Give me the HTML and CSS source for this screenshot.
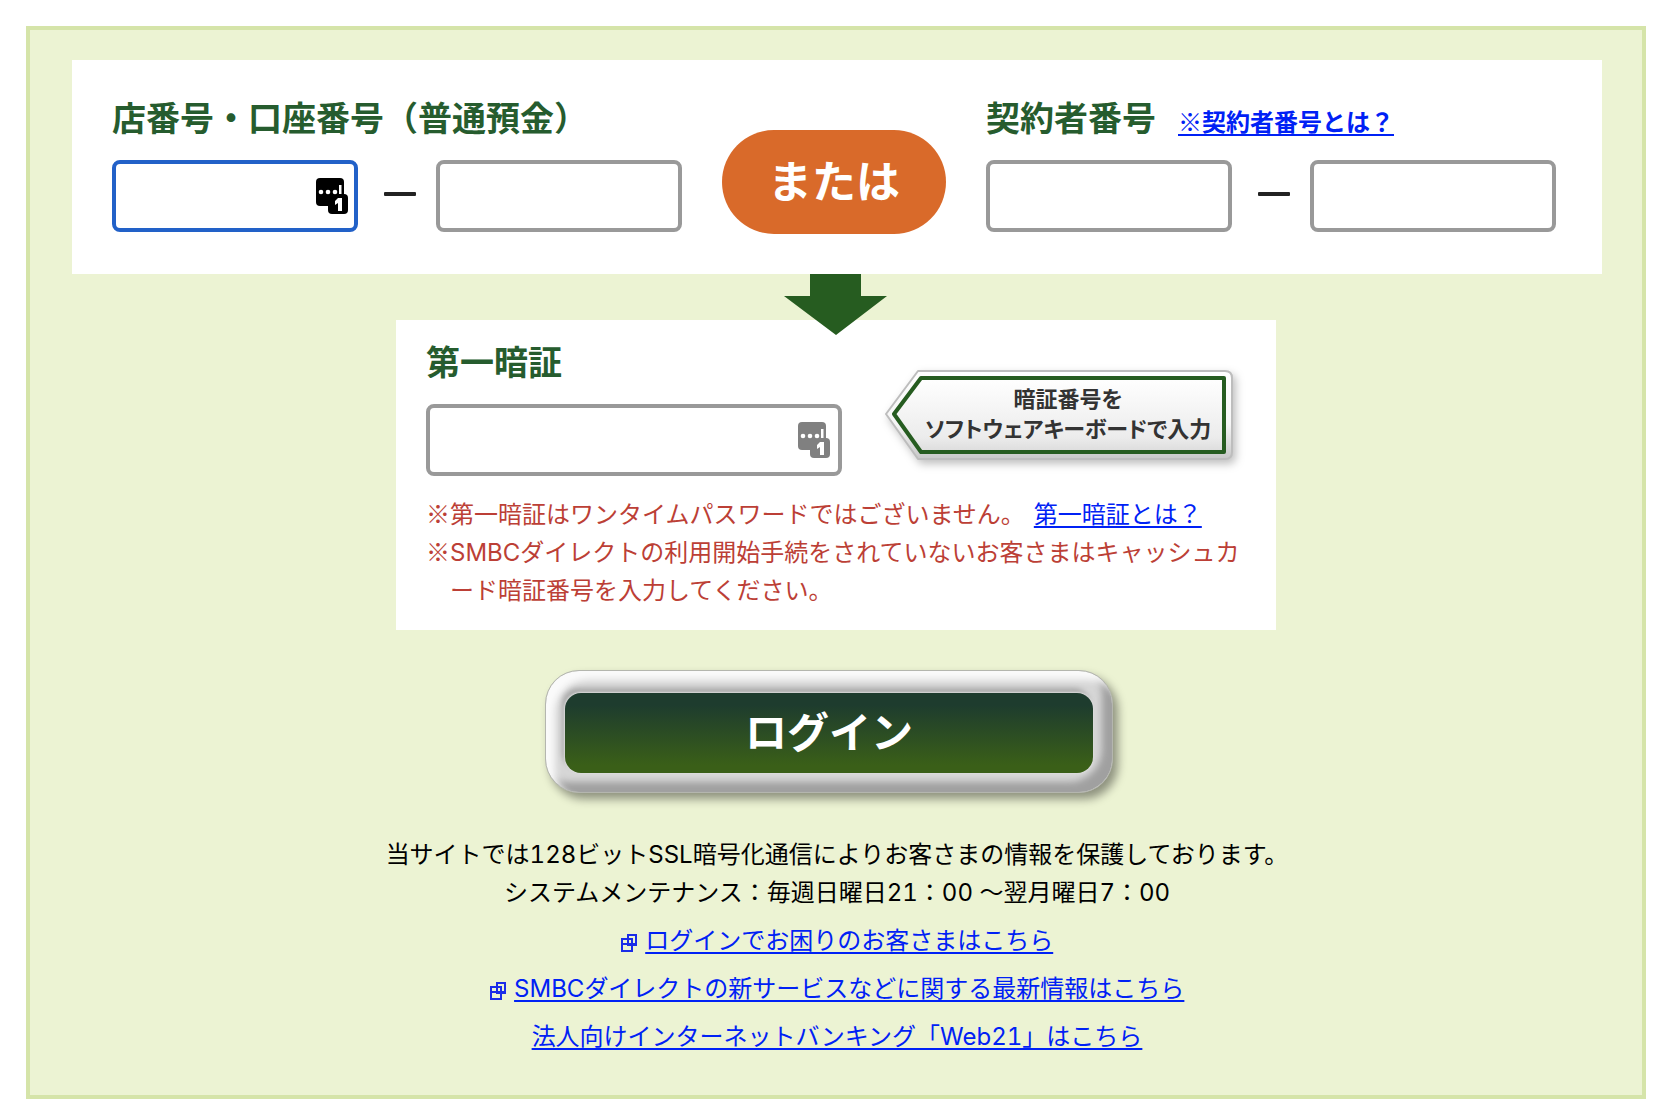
FILE: index.html
```html
<!DOCTYPE html>
<html lang="ja">
<head>
    <meta charset="UTF-8">
    <meta name="viewport" content="width=device-width, initial-scale=1.0">
    <title>ログイン</title>
    <link rel="stylesheet" href="styles.css">
</head>
<body>

<form class="login" id="login-form">
    <div class="account-box">
        <div class="account-group">
            <div class="label-row">
                <label class="label" for="branch-no">店番号・口座番号（普通預金）</label>
            </div>
            <div class="field-row">
                <div class="field">
                    <input class="input focused" type="text" id="branch-no" maxlength="3">
                    <svg class="key-icon" width="32" height="36" viewBox="0 0 32 36">
                        <rect width="28" height="28" rx="4"/>
                        <rect x="12" y="16" width="20" height="20" rx="4"/>
                        <g fill="#fff">
                            <circle cx="5" cy="14" r="2.3"/>
                            <circle cx="12" cy="14" r="2.3"/>
                            <circle cx="19" cy="14" r="2.3"/>
                            <rect x="23" y="7" width="2.5" height="9"/>
                            <path d="M22 20h4v13h-4v-8l-3 2v-4z"/>
                        </g>
                    </svg>
                </div>
                <span class="dash"></span>
                <input class="input" type="text" id="account-no" aria-label="口座番号" maxlength="7">
            </div>
        </div>
        <div class="or">または</div>
        <div class="account-group">
            <div class="label-row">
                <label class="label" for="contract-no1">契約者番号</label>
                <a class="help-link" href="#">※契約者番号とは？</a>
            </div>
            <div class="field-row">
                <input class="input" type="text" id="contract-no1" maxlength="5">
                <span class="dash"></span>
                <input class="input" type="text" id="contract-no2" aria-label="契約者番号" maxlength="5">
            </div>
        </div>
        <svg class="arrow" width="104" height="62" viewBox="0 0 104 62">
            <path d="M26 0h51v22h26L52 61 0 22h26z" fill="#265c20"/>
        </svg>
    </div>

    <div class="pass-box">
        <div class="pass-row">
            <div class="pass-group">
                <label class="label" for="password">第一暗証</label>
                <div class="field">
                    <input class="input wide" type="password" id="password">
                    <svg class="key-icon gray" width="32" height="36" viewBox="0 0 32 36">
                        <rect width="28" height="28" rx="4"/>
                        <rect x="12" y="16" width="20" height="20" rx="4"/>
                        <g fill="#fff">
                            <circle cx="5" cy="14" r="2.3"/>
                            <circle cx="12" cy="14" r="2.3"/>
                            <circle cx="19" cy="14" r="2.3"/>
                            <rect x="23" y="7" width="2.5" height="9"/>
                            <path d="M22 20h4v13h-4v-8l-3 2v-4z"/>
                        </g>
                    </svg>
                </div>
            </div>
            <button type="button" class="keyboard-btn" id="keyboard-btn">
                <svg class="keyboard-bg" width="348" height="90" viewBox="0 0 348 90">
                    <defs>
                        <linearGradient id="plate" x1="0" y1="0" x2="0" y2="1">
                            <stop offset="0" stop-color="#fff"/>
                            <stop offset="0.6" stop-color="#f6f6f6"/>
                            <stop offset="1" stop-color="#c8c8c8"/>
                        </linearGradient>
                        <linearGradient id="face" x1="0" y1="0" x2="0" y2="1">
                            <stop offset="0" stop-color="#fff"/>
                            <stop offset="0.8" stop-color="#ececec"/>
                            <stop offset="1" stop-color="#dcdcdc"/>
                        </linearGradient>
                    </defs>
                    <path d="M33 1h307q7 0 7 7v74q0 7-7 7H33L1 44z" fill="url(#plate)" stroke="#bdbdbd" stroke-width="2" stroke-linejoin="round"/>
                    <path d="M36 8h303v74H36L9 44z" fill="url(#face)" stroke="#265c20" stroke-width="4" stroke-linejoin="round"/>
                </svg>
                <span class="keyboard-text">暗証番号を<br>ソフトウェアキーボードで入力</span>
            </button>
        </div>
        <p class="note"><span class="mark">※</span>第一暗証はワンタイムパスワードではございません。<a class="note-link" href="#">第一暗証とは？</a></p>
        <p class="note"><span class="mark">※</span>SMBCダイレクトの利用開始手続をされていないお客さまはキャッシュカ<wbr>ード暗証番号を入力してください。</p>
    </div>

    <button type="submit" class="login-btn"><span class="login-text">ログイン</span></button>

    <div class="info">
        <p>当サイトでは128ビットSSL暗号化通信によりお客さまの情報を保護しております。</p>
        <p>システムメンテナンス：毎週日曜日21：00 ～翌月曜日7：00</p>
    </div>
    <ul class="links">
        <li>
            <svg class="win-icon" width="18" height="18" viewBox="0 0 18 18"><path d="M7 1h8v10H7zM1 5h10v12H1zM1 10h14" fill="none" stroke="#1a2ce8" stroke-width="2"/></svg>
            <a href="#">ログインでお困りのお客さまはこちら</a>
        </li>
        <li>
            <svg class="win-icon" width="18" height="18" viewBox="0 0 18 18"><path d="M7 1h8v10H7zM1 5h10v12H1zM1 10h14" fill="none" stroke="#1a2ce8" stroke-width="2"/></svg>
            <a href="#">SMBCダイレクトの新サービスなどに関する最新情報はこちら</a>
        </li>
        <li><a href="#">法人向けインターネットバンキング「Web21」はこちら</a></li>
    </ul>
</form>

</body>
</html>
```

FILE: styles.css
```css
* {
    box-sizing: border-box;
}
body {
    margin: 26px 16px 10px 26px;
    background: #fff;
    color: #000;
    font-family: Inter, "Noto Sans CJK JP", sans-serif;
    font-size: 24px;
    font-variant-numeric: tabular-nums;
    line-height: 38px;
}
p {
    margin: 0;
}
a {
    color: #0021f5;
    text-decoration: underline;
    text-decoration-thickness: 2px;
    text-underline-offset: 3px;
}
.login {
    display: flex;
    flex-direction: column;
    align-items: center;
    padding: 30px 40px 29px 42px;
    background: #ecf3d3;
    border: 4px solid #d5e4a9;
}

/* account numbers */
.account-box {
    position: relative;
    display: flex;
    justify-content: center;
    align-items: flex-start;
    gap: 40px;
    align-self: stretch;
    padding: 36px 46px 40px 40px;
    background: #fff;
}
.label-row {
    display: flex;
    align-items: baseline;
    gap: 22px;
}
.label {
    display: block;
    color: #265c2e;
    font-size: 34px;
    font-weight: bold;
    line-height: 46px;
}
.help-link {
    font-family: "Noto Sans CJK JP", sans-serif;
    font-weight: bold;
}
.field-row {
    display: flex;
    align-items: center;
    margin-top: 18px;
}
.field {
    position: relative;
}
.input {
    display: block;
    width: 246px;
    height: 72px;
    padding: 0 16px;
    font-size: 34px;
    background: #fff;
    border: 4px solid #999;
    border-radius: 8px;
    outline: none;
}
.input.focused {
    border-color: #2261c8;
}
.input.wide {
    width: 416px;
}
.key-icon {
    position: absolute;
    top: 18px;
    right: 10px;
}
.key-icon.gray {
    right: 12px;
    fill: #808080;
}
.dash {
    width: 32px;
    height: 4px;
    margin: 0 20px 4px 26px;
    background: #222;
    border-radius: 1px;
}
.or {
    width: 224px;
    height: 104px;
    margin-top: 34px;
    color: #fff;
    font-size: 44px;
    font-weight: bold;
    line-height: 104px;
    text-align: center;
    background: #d96a2a;
    border-radius: 52px;
}
.arrow {
    position: absolute;
    top: 100%;
    left: 50%;
    margin-left: -53px;
}

/* password */
.pass-box {
    width: 880px;
    margin: 46px 2px 0 0;
    padding: 20px 30px;
    background: #fff;
}
.pass-row {
    display: flex;
    align-items: flex-start;
    justify-content: space-between;
    padding-right: 13px;
    margin-bottom: 20px;
}
.pass-group .field {
    margin-top: 18px;
}
.keyboard-btn {
    position: relative;
    width: 348px;
    height: 90px;
    margin-top: 30px;
    padding: 0 0 2px 18px;
    font-family: inherit;
    background: none;
    border: none;
    cursor: pointer;
}
.keyboard-bg {
    position: absolute;
    top: 0;
    left: 0;
    filter: drop-shadow(3px 4px 4px rgba(0, 0, 0, 0.25));
}
.keyboard-text {
    position: relative;
    display: block;
    color: #333;
    font-size: 22px;
    font-weight: bold;
    line-height: 30px;
    font-feature-settings: "palt";
    white-space: nowrap;
}
.note {
    padding-left: 24px;
    color: #bc3f36;
    text-indent: -24px;
}
.mark {
    font-family: "Noto Sans CJK JP", sans-serif;
    line-height: 1;
}
.note-link {
    margin-left: 9px;
}

/* login button */
.login-btn {
    width: 568px;
    height: 123px;
    margin: 40px 16px 0 0;
    padding: 22px 19px 19px;
    font-family: inherit;
    background: #d6d6d6;
    border: 1px solid #b4b6ae;
    border-radius: 34px;
    box-shadow:
        inset 9px 9px 7px #fafafa,
        inset -10px -10px 7px #a0a0a0,
        5px 6px 10px rgba(0, 0, 0, 0.4);
    cursor: pointer;
}
.login-text {
    display: block;
    height: 80px;
    color: #fff;
    font-size: 42px;
    font-weight: bold;
    line-height: 80px;
    background: linear-gradient(to bottom, #1e3c2e 15%, #3a5f18 90%);
    border-radius: 16px;
    box-shadow: 0 0 2px 1px #ddd, -3px -5px 5px #aaa;
}

/* footer text */
.info {
    margin-top: 43px;
    text-align: center;
}
.links {
    margin: 10px 0 0;
    padding: 0;
    list-style: none;
    text-align: center;
}
.links li {
    margin-bottom: 10px;
}
.win-icon {
    vertical-align: -3px;
}
```
